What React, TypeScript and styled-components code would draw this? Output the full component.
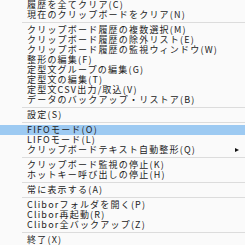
import React from "react";
import styled, { createGlobalStyle } from "styled-components";

const Global = createGlobalStyle`
  html, body { margin: 0; padding: 0; background: #fafafa; }
  body { width: 245px; height: 245px; overflow: hidden; }
`;

const Menu = styled.ul`
  list-style: none;
  margin: 0;
  padding: 0;
  width: 245px;
  background: #fafafa;
  font-family: "Noto Sans CJK JP", "Noto Sans", sans-serif;
  font-size: 9px;
  color: #222;
`;

const Item = styled.li<{ $active?: boolean }>`
  position: relative;
  display: flex;
  align-items: center;
  height: 10px;
  padding-left: 27px;
  line-height: 10px;
  letter-spacing: 1.2px;
  white-space: nowrap;
  background: ${(p) => (p.$active ? "#9dcaf2" : "transparent")};
`;

const Separator = styled.li`
  height: 5px;
  display: flex;
  align-items: center;
  padding-left: 22px;
  &::after {
    content: "";
    flex: 1;
    height: 1px;
    background: #dcdcdc;
  }
`;

const Arrow = styled.span`
  position: absolute;
  right: 6px;
  top: 3px;
  width: 0;
  height: 0;
  border-top: 2.5px solid transparent;
  border-bottom: 2.5px solid transparent;
  border-left: 4px solid #111;
`;

type Entry = { label: string; sep?: boolean; active?: boolean; sub?: boolean };

const entries: Entry[] = [
  { label: "履歴を全てクリア(C)" },
  { label: "現在のクリップボードをクリア(N)" },
  { label: "", sep: true },
  { label: "クリップボード履歴の複数選択(M)" },
  { label: "クリップボード履歴の除外リスト(E)" },
  { label: "クリップボード履歴の監視ウィンドウ(W)" },
  { label: "整形の編集(F)" },
  { label: "定型文グループの編集(G)" },
  { label: "定型文の編集(T)" },
  { label: "定型文CSV出力/取込(V)" },
  { label: "データのバックアップ・リストア(B)" },
  { label: "", sep: true },
  { label: "設定(S)" },
  { label: "", sep: true },
  { label: "FIFOモード(O)", active: true },
  { label: "LIFOモード(L)" },
  { label: "クリップボードテキスト自動整形(Q)", sub: true },
  { label: "", sep: true },
  { label: "クリップボード監視の停止(K)" },
  { label: "ホットキー呼び出しの停止(H)" },
  { label: "", sep: true },
  { label: "常に表示する(A)" },
  { label: "", sep: true },
  { label: "Cliborフォルダを開く(P)" },
  { label: "Clibor再起動(R)" },
  { label: "Clibor全バックアップ(Z)" },
  { label: "", sep: true },
  { label: "終了(X)" },
];

export default function App() {
  return (
    <>
      <Global />
      <Menu>
        {entries.map((e, i) =>
          e.sep ? (
            <Separator key={i} />
          ) : (
            <Item key={i} $active={e.active}>
              {e.label}
              {e.sub && <Arrow />}
            </Item>
          )
        )}
      </Menu>
    </>
  );
}
